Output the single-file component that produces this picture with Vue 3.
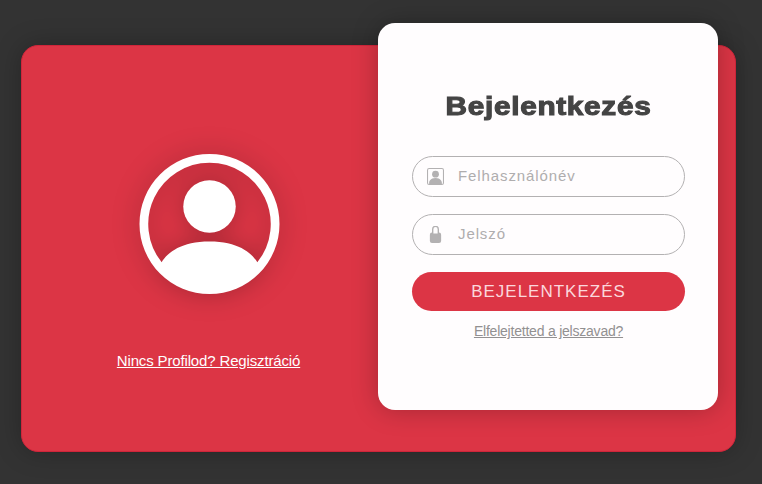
<script setup>
const fields = [
  { name: 'username', type: 'text', placeholder: 'Felhasználónév', icon: 'person' },
  { name: 'password', type: 'password', placeholder: 'Jelszó', icon: 'lock' },
]
</script>

<template>
  <main class="page">
    <div class="card">
      <section class="intro">
        <svg class="avatar" viewBox="0 0 16 16" fill="currentColor">
          <path d="M11 6a3 3 0 1 1-6 0 3 3 0 0 1 6 0z" />
          <path fill-rule="evenodd" d="M0 8a8 8 0 1 1 16 0A8 8 0 0 1 0 8zm8-7a7 7 0 0 0-5.468 11.37C3.242 11.226 4.805 10 8 10s4.757 1.225 5.468 2.37A7 7 0 0 0 8 1z" />
        </svg>
        <a class="register" href="#">Nincs Profilod? Regisztráció</a>
      </section>
      <form class="login" @submit.prevent>
        <h1>Bejelentkezés</h1>
        <label v-for="field in fields" :key="field.name" class="field">
          <svg v-if="field.icon === 'person'" class="icon" viewBox="0 0 16 16" fill="currentColor">
            <circle cx="8" cy="5.8" r="3.2" />
            <path d="M2 0a2 2 0 0 0-2 2v12a2 2 0 0 0 2 2h12a2 2 0 0 0 2-2V2a2 2 0 0 0-2-2H2zm12 1a1 1 0 0 1 1 1v12a1 1 0 0 1-1 1v-1c0-1-1-4.5-6-4.5s-6 3.5-6 4.5v1a1 1 0 0 1-1-1V2a1 1 0 0 1 1-1h12z" />
          </svg>
          <svg v-else class="icon" viewBox="0 0 16 16" fill="currentColor">
            <path d="M8 1a2 2 0 0 1 2 2v4H6V3a2 2 0 0 1 2-2zm3.3 5.2V3a3.3 3.3 0 0 0-6.6 0v3.2a2 2 0 0 0-2 2V14a2 2 0 0 0 2 2h6.6a2 2 0 0 0 2-2V8.200a2 2 0 0 0-2-2z" />
          </svg>
          <input :type="field.type" :name="field.name" :placeholder="field.placeholder" />
        </label>
        <button type="submit">BEJELENTKEZÉS</button>
        <a class="forgot" href="#">Elfelejtetted a jelszavad?</a>
      </form>
    </div>
  </main>
</template>

<style>
body {
  margin: 0;
  background: #333;
}
</style>

<style scoped>
.page {
  box-sizing: border-box;
  height: 484px;
  padding: 45px 26px 32px 21px;
  overflow: hidden;
  background: #333;
  font-family: "Liberation Sans", Arial, sans-serif;
}
.card {
  box-sizing: border-box;
  display: flex;
  height: 407px;
  border: 1px solid #cf253a;
  border-radius: 17px;
  background: #dc3545;
  box-shadow: 0 0 26px rgba(0, 0, 0, 0.25);
}
.intro {
  display: flex;
  flex-direction: column;
  align-items: center;
  width: 356px;
  padding: 108px 0 0 17px;
  box-sizing: border-box;
}
.avatar {
  width: 141px;
  height: 140px;
  margin-left: 1px;
  color: #fff;
  overflow: visible;
  filter: drop-shadow(0 0 13px rgba(0, 0, 0, 0.25));
}
.register {
  margin-top: 58px;
  color: #fff;
  font-size: 15px;
  line-height: 18px;
  letter-spacing: -0.15px;
  white-space: nowrap;
}
.login {
  box-sizing: border-box;
  display: flex;
  flex-direction: column;
  width: 340px;
  height: 387px;
  margin-top: -23px;
  padding: 66px 33px 0 34px;
  border-radius: 17px;
  background: #fffdfe;
  box-shadow: 0 0 26px rgba(0, 0, 0, 0.25);
}
h1 {
  margin: 0 0 33px;
  color: #444;
  font-family: "Liberation Sans", Arial, sans-serif;
  font-size: 26px;
  font-weight: 700;
  line-height: 34px;
  letter-spacing: 0.6px;
  text-align: center;
  white-space: nowrap;
  transform: scaleX(1.145);
  -webkit-text-stroke: 1.1px #444;
}
.field {
  box-sizing: border-box;
  display: flex;
  align-items: center;
  gap: 14px;
  height: 41px;
  margin-bottom: 17px;
  padding: 0 14px;
  border: 1px solid #b3b1b2;
  border-radius: 21px;
  color: #b3b1b2;
}
.icon {
  flex: none;
  width: 17px;
  height: 17px;
}
input {
  flex: 1;
  min-width: 0;
  padding: 0 0 2px;
  border: 0;
  outline: 0;
  background: transparent;
  color: #555;
  font: 15px "Liberation Sans", Arial, sans-serif;
  letter-spacing: 0.9px;
}
input::placeholder {
  color: #afadae;
  opacity: 1;
}
button {
  height: 39px;
  padding: 0;
  border: 0;
  border-radius: 20px;
  background: #dc3545;
  color: #fbd7dc;
  font: 17px "Liberation Sans", Arial, sans-serif;
  letter-spacing: 1px;
}
.forgot {
  align-self: center;
  margin-top: 12px;
  color: #929091;
  font-size: 14px;
  line-height: 16px;
  letter-spacing: -0.22px;
  white-space: nowrap;
}
</style>
